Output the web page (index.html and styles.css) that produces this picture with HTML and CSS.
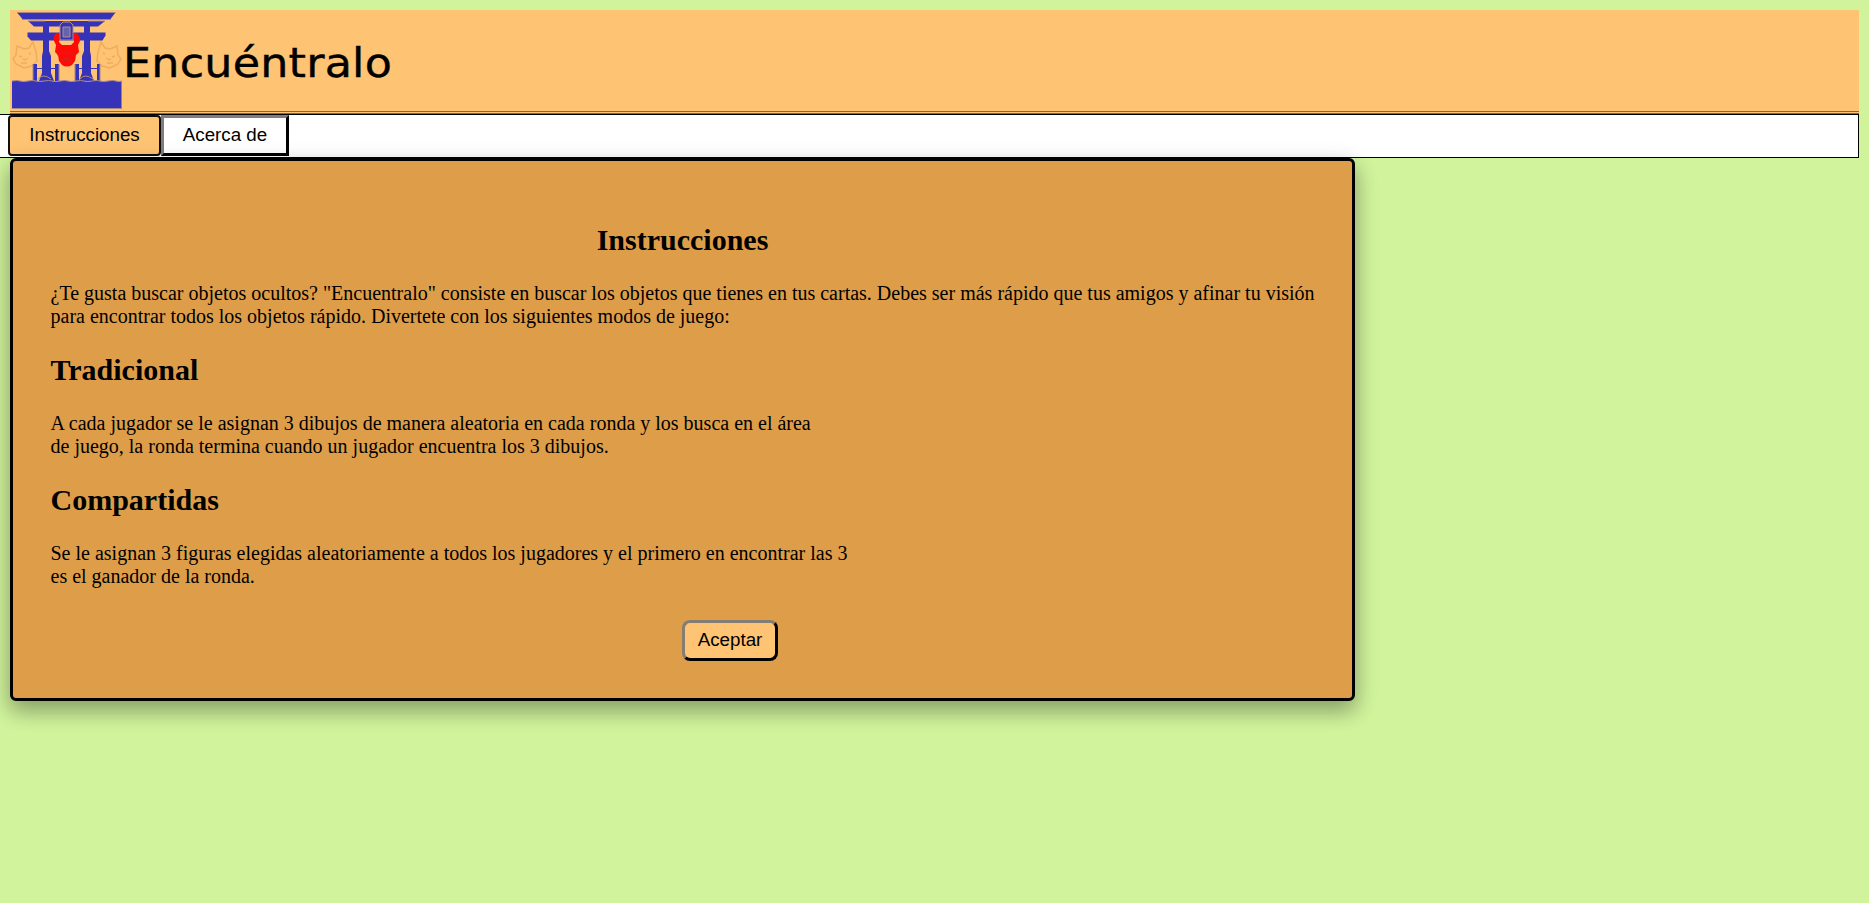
FILE: index.html
```html
<!DOCTYPE html>
<html lang="es">
<head>
<meta charset="utf-8">
<title>Encuéntralo</title>
<link rel="stylesheet" href="styles.css">
</head>
<body>
<header class="header">
  <svg class="logo" viewBox="0 0 113 101" aria-hidden="true">
    <g fill="none" stroke="#f0ad5c" stroke-width="1.500">
      <path d="M7 36l7 3 5-1 4-6 3 10 1 9-5 5-8 2-8-4-3-5 3-4z"/>
      <path d="M107 36l-7 3-5-1-4-6-3 10-1 9 5 5 8 2 8-4 3-5-3-4z"/>
      <path d="M9 46l3 1m7-3l2-1m-8 6l2 1 3-2m-7 5h6M105 46l-3 1m-7-3l-2-1m8 6l-2 1-3-2m7 5h-6"/>
    </g>
    <g fill="#3733b8">
      <path d="M7 2.500h98.500l-5 6.500H12.500z"/>
      <path d="M18 11h77l-7 5.500H24z"/>
      <path d="M17.500 22.500h78v3l-3 5H21l-3.500-4z"/>
      <path d="M33 15h6v26l2 5v17l3 8h-15l3-8V46l1-5zM74 15h6v26l1 5v17l3 8H69l3-8V46l2-5z"/>
      <path d="M23 54h4v17h-4zM45 54h4v17h-4zM65 54h4v17h-4zM87 54h3v17h-3z"/>
      <path d="M25 58h22v1H25zM66 58h23v1H66z"/>
      <path d="M2 71q5-1 8 0t8 0 8 0 8 0 8 0 8 0 8 0 8 0 8 0 8 0 8 0 8 0 8 0 5.500 0v27.500H2z"/>
    </g>
    <path fill="none" stroke="#a78a87" d="M7 2.500h98.500M12 9.500h89M18 11h17M78 11h17M28 69q5-6 13 0M70 69q5-6 13 0M23 54v17M49 54v17M65 54v17M90 54v17M2 71q5-1 8 0t8 0 8 0 8 0 8 0 8 0 8 0 8 0 8 0 8 0 8 0 8 0 8 0 5.500 0M2 98.500h110"/>
    <path fill="#fe0b08" d="M46 23h3v9l3 3h9l3-3v-9h3q3 3 3 8l-2 4 1 7-3 3-1 6-3 4q-5 3-10 0l-3-4-1-6-3-3 1-7-2-4q-1-5 2-8z"/>
    <path fill="none" stroke="#d42328" d="M47 45q8-4 18 0M51 52q5-8 11 0M54 51l2-2 3 2"/>
    <path fill="#3733b8" stroke="#ad918a" d="M50 30V15l3-3h7l3 3v15z"/>
    <path fill="#6662ab" stroke="#ad918a" d="M53 17h7v10h-7z"/>
  </svg>
  <span class="brand">Encuéntralo</span>
</header>
<nav class="nav">
  <button class="tab tab-active">Instrucciones</button>
  <button class="tab">Acerca de</button>
</nav>
<main class="panel">
  <h2 class="heading heading-center">Instrucciones</h2>
  <p class="text">¿Te gusta buscar objetos ocultos? "Encuentralo" consiste en buscar los objetos que tienes en tus cartas. Debes ser más rápido que tus amigos y afinar tu visión<br>para encontrar todos los objetos rápido. Divertete con los siguientes modos de juego:</p>
  <h2 class="heading">Tradicional</h2>
  <p class="text">A cada jugador se le asignan 3 dibujos de manera aleatoria en cada ronda y los busca en el área<br>de juego, la ronda termina cuando un jugador encuentra los 3 dibujos.</p>
  <h2 class="heading">Compartidas</h2>
  <p class="text">Se le asignan 3 figuras elegidas aleatoriamente a todos los jugadores y el primero en encontrar las 3<br>es el ganador de la ronda.</p>
  <button class="accept">Aceptar</button>
</main>
</body>
</html>
```
FILE: styles.css
```css
* { box-sizing: border-box; }
body {
  min-height: 100vh;
  margin: 0;
  padding: 10px 10px 0 0;
  background: #d0f39c;
  color: #000;
  font: 20px/23px "Liberation Serif", "Times New Roman", serif;
}
.header {
  display: flex;
  height: 104px;
  margin-left: 10px;
  border-bottom: 3px double #80674f;
  background: #ffc374;
}
.logo { width: 113px; height: 101px; flex: none; }
.brand {
  padding-top: 29px;
  font: 40px/48px "DejaVu Sans", sans-serif;
  letter-spacing: 0.2px;
  transform: scaleX(1.11);
  transform-origin: left;
  -webkit-text-stroke: 0.4px #000;
}
.nav {
  display: flex;
  height: 44px;
  padding-left: 8px;
  border: 1px solid #000;
  border-left: 0;
  background: #fff;
}
.tab, .accept {
  padding: 0 0 2px;
  color: #000;
  font: 18.75px/22px "Liberation Sans", Arial, sans-serif;
}
.tab {
  width: 128px;
  height: 41px;
  border: 3px solid #000;
  border-top-color: #827b80;
  border-left-color: #827b80;
  background: #fff;
}
.tab-active {
  width: 153px;
  border: 2px solid #101010;
  border-radius: 4px;
  background: #ffc374;
}
.panel {
  display: flex;
  flex-direction: column;
  position: relative;
  width: 1345px;
  height: 543px;
  margin-left: 10px;
  padding: 62px 37.5px 0;
  border: 3px solid #000;
  border-radius: 6px;
  background: #de9e49;
  box-shadow: 0 10px 20px rgba(0, 0, 0, 0.2), 0 7.5px 25px rgba(0, 0, 0, 0.19);
}
.heading {
  margin: 0 0 25px;
  font-size: 30px;
  line-height: 34px;
}
.heading-center { text-align: center; }
.text {
  margin: 0 0 25px;
  white-space: nowrap;
}
.accept {
  align-self: center;
  width: 96px;
  height: 41px;
  margin: 7px 0 0 95px;
  border: 3px solid #000;
  border-top-color: #857c72;
  border-left-color: #857c72;
  border-radius: 8px;
  background: #ffc374;
}
```
